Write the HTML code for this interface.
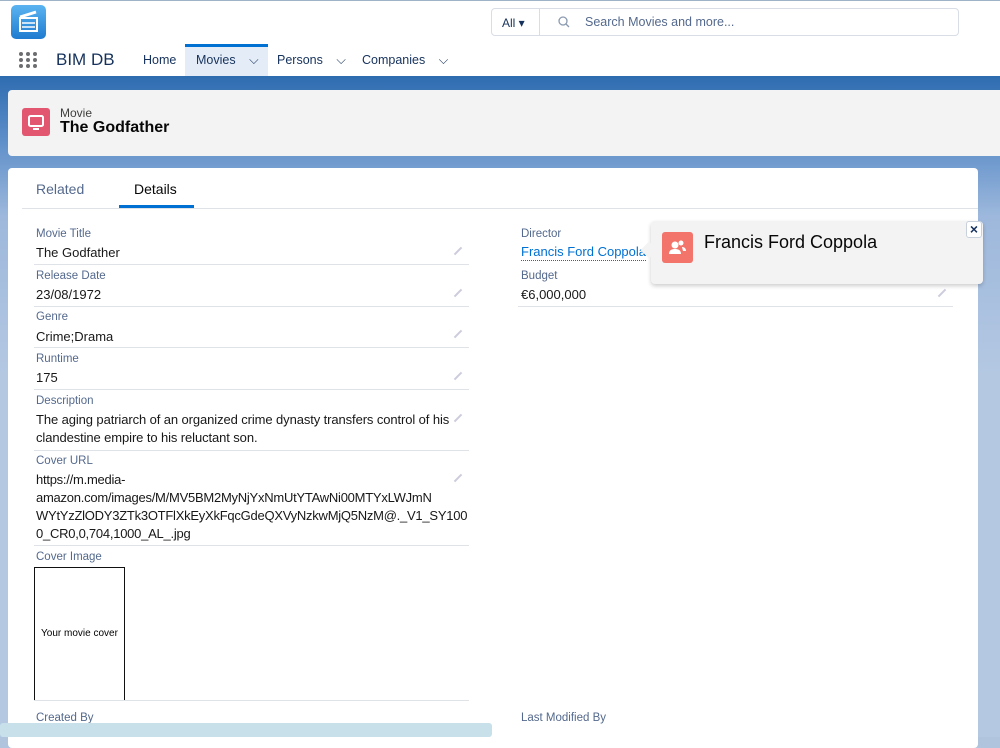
<!DOCTYPE html>
<html><head><style>
*{margin:0;padding:0;box-sizing:border-box}
body{width:1000px;height:737px;overflow:hidden;font-family:"Liberation Sans",sans-serif;background:#b0c4de;position:relative;color:#16325c}
.top{position:absolute;left:0;top:0;width:1000px;height:76px;background:#fff;border-top:1px solid #9fb3c8}
.band{position:absolute;left:0;top:76px;width:1000px;height:661px;background:linear-gradient(180deg,#2e6cb0 0,#5a8cc8 60px,#9db8dc 140px,#b4c8e2 300px)}
.logo{position:absolute;left:11px;top:5px;width:35px;height:34px;border-radius:5px;background:linear-gradient(#5bb4f0,#1f7bd0)}
.search{position:absolute;left:491px;top:8px;width:468px;height:28px;border:1px solid #d8dde6;border-radius:4px;background:#fff}
.search .all{position:absolute;left:0;top:0;width:48px;height:26px;border-right:1px solid #d8dde6;font-size:12px;color:#16325c;padding:7px 0 0 10px}
.search .ph{position:absolute;left:93px;top:6px;font-size:12.5px;color:#54698d}
.a{position:absolute;top:53px;font-size:12.5px;color:#16325c}
.hdr{position:absolute;left:8px;top:90px;width:992px;height:66px;background:#f3f3f3;border-radius:4px 0 0 4px}
.card{position:absolute;left:8px;top:168px;width:970px;height:580px;background:#fff;border-radius:4px}
.lbl{position:absolute;font-size:11.5px;color:#54698d}
.val{position:absolute;font-size:13px;color:#181818;line-height:18px}
.ln{position:absolute;height:1px;background:#dfe2e7}
.pen{position:absolute;width:10px;height:2px;background:#ccd;transform:rotate(-45deg)}
.url div{white-space:nowrap;letter-spacing:-0.25px}
</style></head><body>
<div class="top"></div>
<div class="band"></div>
<div class="logo"><svg width="35" height="34" viewBox="0 0 35 34"><rect x="9" y="13" width="17" height="13" fill="none" stroke="#fff" stroke-width="2"/><path d="M9 12 L25 7" stroke="#fff" stroke-width="3"/><path d="M11 18h13M11 22h13" stroke="#fff" stroke-width="1.5"/></svg></div>
<div class="search"><div class="all">All ▾</div><svg style="position:absolute;left:66px;top:7px" width="12" height="12"><circle cx="5" cy="5" r="4" fill="none" stroke="#8a9ab0" stroke-width="1.3"/><path d="M8 8l3 3" stroke="#8a9ab0" stroke-width="1.3"/></svg><div class="ph">Search Movies and more...</div></div>
<svg style="position:absolute;left:18px;top:51px" width="20" height="18"><g fill="#6b6d70"><circle cx="3" cy="3" r="2"/><circle cx="10" cy="3" r="2"/><circle cx="17" cy="3" r="2"/><circle cx="3" cy="9" r="2"/><circle cx="10" cy="9" r="2"/><circle cx="17" cy="9" r="2"/><circle cx="3" cy="15" r="2"/><circle cx="10" cy="15" r="2"/><circle cx="17" cy="15" r="2"/></g></svg>
<div style="position:absolute;left:56px;top:50px;font-size:17px;color:#16325c">BIM DB</div>
<div style="position:absolute;left:185px;top:44px;width:83px;height:32px;background:#e4edf7;border-top:3px solid #0070d2"></div>
<div class="a" style="left:143px">Home</div>
<div class="a" style="left:196px">Movies <span style="margin-left:10px">⌵</span></div>
<div class="a" style="left:277px">Persons <span style="margin-left:10px">⌵</span></div>
<div class="a" style="left:362px">Companies <span style="margin-left:10px">⌵</span></div>
<div class="hdr"></div>
<div style="position:absolute;left:22px;top:108px;width:28px;height:28px;background:#e3566f;border-radius:3px"><svg width="28" height="28"><rect x="7" y="8" width="14" height="10" rx="1.5" fill="none" stroke="#fff" stroke-width="2"/><path d="M11 21h6" stroke="#fff" stroke-width="2"/></svg></div>
<div style="position:absolute;left:60px;top:106px;font-size:12px;color:#3e3e3c">Movie</div>
<div style="position:absolute;left:60px;top:119px;font-size:16px;font-weight:bold;color:#080707">The Godfather</div>
<div class="card"></div>
<div style="position:absolute;left:36px;top:181px;font-size:14px;color:#54698d">Related</div>
<div style="position:absolute;left:134px;top:181px;font-size:14px;color:#080707">Details</div>
<div style="position:absolute;left:119px;top:205px;width:75px;height:3px;background:#0070d2"></div>
<div class="ln" style="left:22px;top:208px;width:956px"></div>

<div class="lbl" style="left:36px;top:228px">Movie Title</div><div class="val" style="left:36px;top:244px">The Godfather</div><div class="ln" style="left:34px;top:264px;width:435px"></div><div class="pen" style="left:453px;top:250px"></div>
<div class="lbl" style="left:36px;top:270px">Release Date</div><div class="val" style="left:36px;top:286px">23/08/1972</div><div class="ln" style="left:34px;top:306px;width:435px"></div><div class="pen" style="left:453px;top:292px"></div>
<div class="lbl" style="left:36px;top:311px">Genre</div><div class="val" style="left:36px;top:328px">Crime;Drama</div><div class="ln" style="left:34px;top:347px;width:435px"></div><div class="pen" style="left:453px;top:333px"></div>
<div class="lbl" style="left:36px;top:353px">Runtime</div><div class="val" style="left:36px;top:369px">175</div><div class="ln" style="left:34px;top:389px;width:435px"></div><div class="pen" style="left:453px;top:375px"></div>
<div class="lbl" style="left:36px;top:395px">Description</div><div class="val" style="left:36px;top:411px;width:432px;letter-spacing:-0.1px">The aging patriarch of an organized crime dynasty transfers control of his clandestine empire to his reluctant son.</div><div class="ln" style="left:34px;top:450px;width:435px"></div><div class="pen" style="left:453px;top:417px"></div>
<div class="lbl" style="left:36px;top:455px">Cover URL</div><div class="val url" style="left:36px;top:471px"><div>https://m.media-</div><div>amazon.com/images/M/MV5BM2MyNjYxNmUtYTAwNi00MTYxLWJmN</div><div>WYtYzZlODY3ZTk3OTFlXkEyXkFqcGdeQXVyNzkwMjQ5NzM@._V1_SY100</div><div>0_CR0,0,704,1000_AL_.jpg</div></div><div class="ln" style="left:34px;top:545px;width:435px"></div><div class="pen" style="left:453px;top:477px"></div>
<div class="lbl" style="left:36px;top:551px">Cover Image</div>
<div style="position:absolute;left:34px;top:567px;width:91px;height:134px;border:1.5px solid #111;font-size:10px;color:#000;text-align:center;padding-top:60px">Your movie cover</div>
<div class="ln" style="left:34px;top:700px;width:435px"></div>
<div class="lbl" style="left:36px;top:712px">Created By</div>
<div class="lbl" style="left:521px;top:712px">Last Modified By</div>
<div style="position:absolute;left:0;top:723px;width:492px;height:14px;background:#c7e0ea;border-radius:3px"></div>

<div class="lbl" style="left:521px;top:228px">Director</div><div class="val" style="left:521px;top:244px;color:#0070d2;border-bottom:1px dotted #0070d2;line-height:16px">Francis Ford Coppola</div>
<div class="lbl" style="left:521px;top:270px">Budget</div><div class="val" style="left:521px;top:286px">€6,000,000</div><div class="ln" style="left:518px;top:306px;width:435px"></div><div class="pen" style="left:937px;top:292px"></div>
<div style="position:absolute;left:651px;top:221px;width:332px;height:63px;background:#f3f3f3;border-radius:4px;box-shadow:0 2px 4px rgba(0,0,0,.2)"></div>
<div style="position:absolute;left:643px;top:244px;width:12px;height:12px;background:#f3f3f3;transform:rotate(45deg)"></div>
<div style="position:absolute;left:662px;top:232px;width:31px;height:31px;background:#f2746b;border-radius:3px"><svg width="31" height="31"><circle cx="13" cy="13" r="3.5" fill="#fff"/><path d="M7 22c0-4 3-5 6-5s6 1 6 5z" fill="#fff"/><circle cx="19" cy="11" r="2.5" fill="#fff"/><path d="M20 15c2 0 4 1 4 4h-3z" fill="#fff"/></svg></div>
<div style="position:absolute;left:704px;top:232px;font-size:18px;color:#080707">Francis Ford Coppola</div>
<div style="position:absolute;left:966px;top:221px;width:16px;height:17px;border:1px solid #c8d0dc;border-radius:3px;background:#fff;font-size:14px;font-weight:bold;color:#16325c;text-align:center;line-height:14px">×</div>
</body></html>
